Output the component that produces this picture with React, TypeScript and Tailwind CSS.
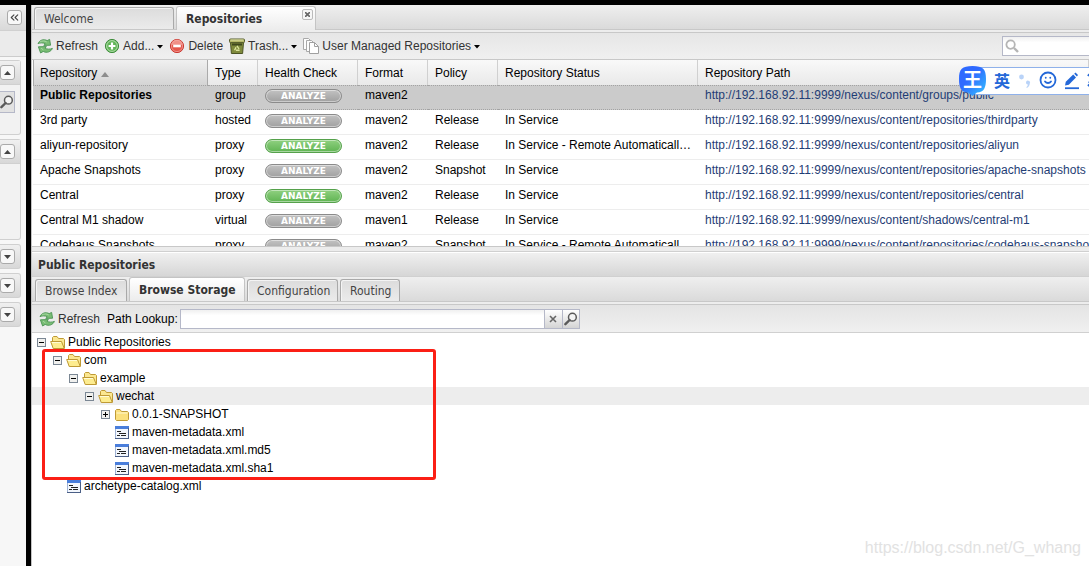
import { useState } from "react";
import { ChevronsLeft, Smile } from "lucide-react";

const ARIAL = "font-['Liberation_Sans',Arial,sans-serif]";
const TAHOMA = "font-['DejaVu_Sans_Condensed',Tahoma,sans-serif]";

const BASE_URL = "http://192.168.92.11:9999/nexus/content/";

const repositories = [
  { name: "Public Repositories", type: "group", format: "maven2", policy: "", status: "", path: "groups/public", active: false },
  { name: "3rd party", type: "hosted", format: "maven2", policy: "Release", status: "In Service", path: "repositories/thirdparty", active: false },
  { name: "aliyun-repository", type: "proxy", format: "maven2", policy: "Release", status: "In Service - Remote Automatically Blocked", path: "repositories/aliyun", active: true },
  { name: "Apache Snapshots", type: "proxy", format: "maven2", policy: "Snapshot", status: "In Service", path: "repositories/apache-snapshots", active: false },
  { name: "Central", type: "proxy", format: "maven2", policy: "Release", status: "In Service", path: "repositories/central", active: true },
  { name: "Central M1 shadow", type: "virtual", format: "maven1", policy: "Release", status: "In Service", path: "shadows/central-m1", active: false },
  { name: "Codehaus Snapshots", type: "proxy", format: "maven2", policy: "Snapshot", status: "In Service - Remote Automatically Blocked", path: "repositories/codehaus-snapshots", active: false },
];

const columns = [
  { label: "Type", width: "w-[50px]" },
  { label: "Health Check", width: "w-[100px]" },
  { label: "Format", width: "w-[70px]" },
  { label: "Policy", width: "w-[70px]" },
  { label: "Repository Status", width: "w-[200px]" },
  { label: "Repository Path", width: "w-auto" },
];

type Node = { label: string; kind: "open" | "closed" | "file"; indent: string };

const nodes: Node[] = [
  { label: "Public Repositories", kind: "open", indent: "pl-0.5" },
  { label: "com", kind: "open", indent: "pl-[18px]" },
  { label: "example", kind: "open", indent: "pl-[34px]" },
  { label: "wechat", kind: "open", indent: "pl-[50px]" },
  { label: "0.0.1-SNAPSHOT", kind: "closed", indent: "pl-[66px]" },
  { label: "maven-metadata.xml", kind: "file", indent: "pl-[66px]" },
  { label: "maven-metadata.xml.md5", kind: "file", indent: "pl-[66px]" },
  { label: "maven-metadata.xml.sha1", kind: "file", indent: "pl-[66px]" },
  { label: "archetype-catalog.xml", kind: "file", indent: "pl-[18px]" },
];

function RefreshIcon() {
  return (
    <svg width="16" height="16" viewBox="0 0 16 16" className="shrink-0">
      <path d="M1 5.6C2.4 2.2 6.6 0.6 10.2 2.6L12.6 1.4L13.6 7.2L6.8 7.4L8.4 5.8C6.2 4.6 3.4 4.6 1 5.6Z" fill="#79bd74" stroke="#4a9352" strokeWidth="0.9" strokeLinejoin="round" />
      <path d="M15.4 10.4C14 13.8 9.8 15.4 6.2 13.4L3.6 15L1.4 8.8L9.4 8.6L8 10.2C10.2 11.4 13 11.4 15.4 10.4Z" fill="#79bd74" stroke="#4a9352" strokeWidth="0.9" strokeLinejoin="round" />
      <path d="M3 4C5 2.6 7.6 2.6 9.8 4M4 10L6.4 12" fill="none" stroke="#b4deae" strokeWidth="0.8" />
    </svg>
  );
}

function AddIcon() {
  return (
    <svg width="16" height="16" viewBox="0 0 16 16" className="shrink-0">
      <circle cx="8" cy="8" r="6.6" fill="#62b558" stroke="#3f8d3c" />
      <circle cx="8" cy="8" r="5.4" fill="none" stroke="#b9e0b3" strokeWidth="0.9" />
      <path d="M8 4.6V11.4M4.6 8H11.4" stroke="#fff" strokeWidth="2.2" />
    </svg>
  );
}

function DeleteIcon() {
  return (
    <svg width="16" height="16" viewBox="0 0 16 16" className="shrink-0">
      <circle cx="8" cy="8" r="6.6" fill="#e5574c" stroke="#c93a32" />
      <path d="M2.4 7A5.6 5.6 0 0 1 13.6 7Z" fill="#f08f86" />
      <circle cx="8" cy="8" r="5.6" fill="none" stroke="#f3a9a3" strokeWidth="0.7" />
      <path d="M4.2 8H11.8" stroke="#fff" strokeWidth="2.6" />
    </svg>
  );
}

function TrashIcon() {
  return (
    <svg width="16" height="16" viewBox="0 0 16 16" className="shrink-0">
      <path d="M1.5 4.5H14.5L13.6 15.5H2.4Z" fill="#7f8a3c" stroke="#4c5424" />
      <path d="M3 6.5H13" stroke="#3f471d" strokeWidth="2" />
      <rect x="0.5" y="1" width="15" height="3.6" rx="1" fill="#b5b868" stroke="#555c2c" />
      <path d="M1.5 2H14.5" stroke="#dfe0aa" />
      <path d="M8 7.8L10 11M10.6 12.2H7M5.6 12.2L7 9.2" stroke="#dbe49b" strokeWidth="1.4" fill="none" />
    </svg>
  );
}

function CopyIcon() {
  return (
    <svg width="16" height="16" viewBox="0 0 16 16" className="shrink-0">
      <path d="M0.5 0.5H5.5L8.5 3.5V11.5H0.5Z" fill="#fdfdfd" stroke="#a9a9a9" />
      <path d="M3.5 2.5H8.5L11.5 5.5V13.5H3.5Z" fill="#fdfdfd" stroke="#a9a9a9" />
      <path d="M6.5 4.5H11.5L15.5 8.5V15.5H6.5Z" fill="#fff" stroke="#a0a0a0" />
      <path d="M11.5 4.5V8.5H15.5" fill="none" stroke="#a0a0a0" />
    </svg>
  );
}

function Caret() {
  return (
    <svg width="6" height="4" viewBox="0 0 6 4" className="mt-0.5 shrink-0">
      <path d="M0 0H6L3 3.4Z" fill="#000" />
    </svg>
  );
}

function Magnifier() {
  return (
    <svg width="14" height="14" viewBox="0 0 14 14">
      <circle cx="8.4" cy="5.2" r="3.9" fill="#f4f4f4" stroke="#5a5a5a" strokeWidth="1.5" />
      <path d="M5.6 8L1.4 12.2" stroke="#5a5a5a" strokeWidth="2.4" strokeLinecap="round" />
    </svg>
  );
}

function FolderIcon({ open }: { open: boolean }) {
  if (open) {
    return (
      <svg width="16" height="18" viewBox="0 0 16 18" className="shrink-0">
        <path d="M2.5 13V4.5L3.5 3.5H7L8.5 5.5H13.5L14.5 6.5V15H4Z" fill="#fbe790" stroke="#bf9a35" />
        <path d="M0.7 8.5H11.5L14.3 15.5H3.2Z" fill="#fdec8f" stroke="#bf9a35" strokeLinejoin="round" />
        <path d="M1.8 9.5H11" stroke="#fffbd6" />
      </svg>
    );
  }
  return (
    <svg width="16" height="18" viewBox="0 0 16 18" className="shrink-0">
      <path d="M1.5 14.5V5.5L2.5 4.5H6L7.5 6.5H13.5L14.5 7.5V14.5L13.5 15.5H2.5Z" fill="#fbe07c" stroke="#bf9a35" />
      <path d="M2.5 8H13.5" stroke="#fff8cf" />
    </svg>
  );
}

function FileIcon() {
  return (
    <svg width="16" height="18" viewBox="0 0 16 18" className="shrink-0">
      <rect x="1.5" y="3.5" width="13" height="12" fill="#f3f7fd" stroke="#9fb2d4" />
      <path d="M1 4.5H15" stroke="#4a7edb" strokeWidth="3" />
      <path d="M1 15.5H15M14.5 5V16" stroke="#4b5f86" />
      <path d="M3 8.5H7M5 10.5H12M3 12.5H6M7 12.5H12" stroke="#222" />
    </svg>
  );
}

function Expander({ open, label }: { open: boolean; label: string }) {
  return (
    <button type="button" aria-label={(open ? "Collapse " : "Expand ") + label} className="flex w-4 shrink-0 justify-center">
      <svg width="10" height="18" viewBox="0 0 10 18">
        <rect x="0.5" y="5.5" width="8" height="8" fill="#f0f0ee" stroke="#7b8794" />
        <path d="M2 9.5H7" stroke="#000" />
        {!open && <path d="M4.5 7V12" stroke="#000" />}
      </svg>
    </button>
  );
}

function ToolButton({ icon, label, menu }: { icon: React.ReactNode; label: string; menu?: boolean }) {
  return (
    <button type="button" className="flex items-center gap-[3px] whitespace-nowrap text-[#333]">
      {icon}
      <span>{label}</span>
      {menu && <Caret />}
    </button>
  );
}

function Tab({ label, active, width, onClick }: { label: string; active: boolean; width: string; onClick?: () => void }) {
  return (
    <button
      type="button"
      role="tab"
      aria-selected={active}
      onClick={onClick}
      className={`${width} rounded-t-[3px] border border-b-0 px-[9px] text-left whitespace-nowrap ${
        active
          ? "h-6 border-[#c4c4c4] bg-linear-to-b from-white to-[#ececec] font-bold text-[#333]"
          : "h-[22px] border-[#a9a9a9] bg-linear-to-b from-[#dcdcdc] to-[#ebebeb] text-[#444] shadow-[inset_1px_1px_0_#f4f4f4]"
      }`}
    >
      {label}
    </button>
  );
}

function ToggleButton({ up, label }: { up?: boolean; label: string }) {
  return (
    <button type="button" aria-label={label} className="flex size-[15px] items-center justify-center rounded-[3px] border border-[#aaa] bg-[#f8f8f8]">
      <svg width="7" height="4" viewBox="0 0 7 4">
        <path d={up ? "M0 4H7L3.5 0Z" : "M0 0H7L3.5 4Z"} fill="#444" />
      </svg>
    </button>
  );
}

function Sidebar() {
  return (
    <aside className="w-[26px] shrink-0 bg-[#f7f7f7]">
      <div className="flex h-[26px] items-center justify-end border-b border-[#d0d0d0] bg-linear-to-b from-[#efefef] to-[#d9d9d9] pr-1">
        <button type="button" aria-label="Collapse sidebar" className="flex size-[15px] items-center justify-center rounded-[3px] border border-[#aaa] bg-[#f8f8f8] text-[#444]">
          <ChevronsLeft size={13} />
        </button>
      </div>
      <div className="h-[26px] border-b border-[#ccc] bg-[#ebebeb]" />
      <div className="mt-[3px] mr-[5px] flex flex-col gap-1">
        <section className="h-[75px] rounded-r-[3px] border border-l-0 border-[#d0d0d0] bg-[#f2f2f2]">
          <div className="h-6 border-b border-[#d0d0d0] bg-linear-to-b from-[#f0f0f0] to-[#d8d8d8] pt-1">
            <ToggleButton up label="Collapse search" />
          </div>
          <button type="button" aria-label="Search artifacts" className="mt-1.5 flex h-[22px] w-[15px] items-center justify-center border border-l-0 border-[#b5b8c8] bg-[#e2e2e2]">
            <Magnifier />
          </button>
        </section>
        <section className="h-[101px] rounded-r-[3px] border border-l-0 border-[#d0d0d0] bg-[#f2f2f2]">
          <div className="h-6 border-b border-[#d0d0d0] bg-linear-to-b from-[#f0f0f0] to-[#d8d8d8] pt-1">
            <ToggleButton up label="Collapse views" />
          </div>
        </section>
        {["security", "administration", "help"].map((name) => (
          <section key={name} className="h-[25px] rounded-r-[3px] border border-l-0 border-[#d0d0d0] bg-linear-to-b from-[#f0f0f0] to-[#d8d8d8] pt-1">
            <ToggleButton label={"Expand " + name} />
          </section>
        ))}
      </div>
    </aside>
  );
}

function RepositoryGrid() {
  return (
    <div className="h-[186px] overflow-hidden bg-white pl-px">
      <table className="w-full min-w-[1056px] table-fixed border-separate border-spacing-0 text-left whitespace-nowrap">
        <thead>
          <tr className="h-[25px] bg-linear-to-b from-[#f9f9f9] to-[#e9e9e9]">
            <th className="w-[175px] border-x border-[#aaa] bg-linear-to-b from-[#f0f0f0] to-[#d4d4d4] pl-1.5 font-normal">
              <span className="flex items-center gap-1">
                Repository
                <svg width="8" height="5" viewBox="0 0 8 5" className="mt-1">
                  <path d="M0 5H8L4 0Z" fill="#8d8d8d" />
                </svg>
              </span>
            </th>
            {columns.map((c) => (
              <th key={c.label} className={`${c.width} border-r border-[#d0d0d0] pl-[7px] font-normal`}>
                {c.label}
              </th>
            ))}
          </tr>
        </thead>
        <tbody>
          {repositories.map((r, i) => {
            const cell =
              i === 0
                ? "h-[25px] border-y border-dotted border-[#a3a3a3] bg-[#cbcbcb] pl-[7px] align-top"
                : "h-[25px] border-t border-b border-t-white border-b-[#ededed] pl-[7px] align-top";
            return (
              <tr key={r.name} className="leading-[18px]">
                <td className={`${cell} ${i === 0 ? "font-bold" : ""}`}>{r.name}</td>
                <td className={cell}>{r.type}</td>
                <td className={cell}>
                  <button
                    type="button"
                    className={`mt-[3px] flex h-3.5 w-[77px] items-center justify-center rounded-full border text-[9px] leading-3 font-bold text-white shadow-[inset_0_0_0_1px_rgba(255,255,255,0.45)] font-['DejaVu_Sans',Verdana,sans-serif] ${
                      r.active ? "border-[#55a14b] bg-linear-to-b from-[#8fd080] to-[#5fb452]" : "border-[#8b8b8b] bg-linear-to-b from-[#c2c2c2] to-[#a0a0a0]"
                    }`}
                  >
                    ANALYZE
                  </button>
                </td>
                <td className={cell}>{r.format}</td>
                <td className={cell}>{r.policy}</td>
                <td className={cell}>
                  <div className="truncate pr-1.5">{r.status}</div>
                </td>
                <td className={cell}>
                  <a href={BASE_URL + r.path} className="text-[#1f3d75]">
                    {BASE_URL + r.path}
                  </a>
                </td>
              </tr>
            );
          })}
        </tbody>
      </table>
    </div>
  );
}

function StorageTree() {
  const [selected, setSelected] = useState("wechat");

  return (
    <div className="relative flex-1 bg-white">
      <ul role="tree">
        {nodes.map((n) => (
          <li
            key={n.label}
            role="treeitem"
            aria-selected={n.label === selected}
            onClick={() => setSelected(n.label)}
            className={`flex h-[18px] items-center whitespace-nowrap ${n.indent} ${n.label === selected ? "bg-[#ededed]" : ""}`}
          >
            {n.kind === "file" ? <span className="w-4 shrink-0" /> : <Expander open={n.kind === "open"} label={n.label} />}
            {n.kind === "file" ? <FileIcon /> : <FolderIcon open={n.kind === "open"} />}
            <span className="pl-0.5">{n.label}</span>
          </li>
        ))}
      </ul>
      {/* highlighted storage path */}
      <div className="pointer-events-none absolute top-4 left-2.5 h-[131px] w-[394px] rounded-[3px] border-3 border-[#fb1f15]" />
      <span className="absolute right-2 bottom-2 text-base leading-5 text-[#e2e2e2]">https://blog.csdn.net/G_whang</span>
    </div>
  );
}

// floating input method bar that hangs over the right edge
function InputMethodBar() {
  return (
    <div className="absolute top-[61px] right-0 flex h-[30px] w-[130px] items-start overflow-hidden font-['Noto_Sans_CJK_SC',sans-serif]">
      <div className="absolute top-px right-0 left-4 h-7 border-y border-[#8fb1ea] bg-white" />
      <div className="relative h-[30px] w-[27px] shrink-0">
        <svg width="27" height="30" viewBox="0 0 27 30" className="absolute">
          <defs>
            <linearGradient id="ime" x1="0" y1="0" x2="1" y2="1">
              <stop offset="0.4" stopColor="#2f6aff" />
              <stop offset="1" stopColor="#35c4ff" />
            </linearGradient>
          </defs>
          <path d="M13.5 0C24 0 27 3 27 13C27 22 25 26 18 26.6L13.5 30L9 26.6C2 26 0 22 0 13C0 3 3 0 13.5 0Z" fill="url(#ime)" />
        </svg>
        <span className="relative block text-center text-[19px] leading-[26px] font-bold text-white">王</span>
      </div>
      <span className="relative ml-2 w-4 shrink-0 text-base leading-[29px] font-bold text-[#2468d8]">英</span>
      <svg width="14" height="30" viewBox="0 0 14 30" className="relative ml-2 shrink-0">
        <circle cx="3.5" cy="11" r="2.4" fill="#b9d3f8" />
        <path d="M8 16.5A2 2 0 1 1 11.8 17.5C11.6 19.5 10.5 21 8.8 22L8.4 21.2C9.3 20.4 9.8 19.6 9.8 18.5C8.8 18.5 8 17.6 8 16.5Z" fill="#b9d3f8" />
      </svg>
      <Smile size={18} strokeWidth={2.4} className="relative mt-[5px] ml-[7px] shrink-0 text-[#2468d8]" />
      <svg width="16" height="30" viewBox="0 0 16 30" className="relative ml-[7px] shrink-0">
        <path d="M1 19.5L1.8 15.8L9.2 8.6L12 11.4L4.8 18.8Z" fill="#2468d8" />
        <path d="M10.2 7.7L11.5 6.6L14 9.1L12.9 10.4Z" fill="#2468d8" />
        <path d="M1 22.2H15" stroke="#2468d8" strokeWidth="1.8" />
      </svg>
      <svg width="10" height="30" viewBox="0 0 10 30" className="relative ml-[7px] shrink-0">
        <path d="M1 10C3 7 6 7 7 9L2 17M1 20L7 14" fill="none" stroke="#2468d8" strokeWidth="2" />
      </svg>
    </div>
  );
}

export default function App() {
  const [tab, setTab] = useState("Browse Storage");

  return (
    <div className={`relative flex min-h-screen overflow-hidden border-t-[5px] border-black bg-black text-xs text-black ${ARIAL}`}>
      <Sidebar />
      <main className="ml-[5px] flex min-w-0 flex-1 flex-col border-l border-[#c4c4c4] bg-[#ededed]">
        <div role="tablist" className={`flex h-[25px] items-end gap-0.5 border-b border-[#c8c8c8] bg-linear-to-b from-[#efefef] to-[#dadada] pl-0.5 ${TAHOMA}`}>
          <Tab label="Welcome" active={false} width="w-[140px]" />
          <div className="relative -mb-px">
            <Tab label="Repositories" active width="w-[140px]" />
            <button type="button" aria-label="Close Repositories" className="absolute top-[3px] right-[3px] flex size-[11px] items-center justify-center rounded-xs border border-[#bbb] bg-[#f6f6f6]">
              <svg width="5" height="5" viewBox="0 0 5 5">
                <path d="M0 0L5 5M5 0L0 5" stroke="#666" strokeWidth="1.6" />
              </svg>
            </button>
          </div>
        </div>

        <div className="mt-0.5 flex h-7 items-center gap-1.5 border-y border-t-[#c8c8c8] border-b-[#c8c8c8] bg-linear-to-b from-[#e6e6e6] to-[#f0f0f0] pl-[5px]">
          <ToolButton icon={<RefreshIcon />} label="Refresh" />
          <ToolButton icon={<AddIcon />} label="Add..." menu />
          <ToolButton icon={<DeleteIcon />} label="Delete" />
          <ToolButton icon={<TrashIcon />} label="Trash..." menu />
          <ToolButton icon={<CopyIcon />} label="User Managed Repositories" menu />
          <label className="ml-auto flex h-5 w-[87px] items-center border border-r-0 border-[#b5b8c8] bg-linear-to-b from-[#f0f0f0] to-white to-30% pl-0.5">
            <svg width="14" height="14" viewBox="0 0 14 14" className="shrink-0">
              <circle cx="5.6" cy="5.6" r="4.2" fill="none" stroke="#b5b5b5" strokeWidth="1.8" />
              <path d="M9 9L13 13" stroke="#b5b5b5" strokeWidth="2.4" />
            </svg>
            <input type="text" aria-label="Search repositories" className="w-full min-w-0 bg-transparent outline-none" />
          </label>
        </div>

        <RepositoryGrid />

        <div className="h-1.5 border-y border-t-[#c8c8c8] border-b-[#d0d0d0] bg-[#ececec]" />
        <h2 className={`h-[25px] border-t border-b border-t-white border-b-[#d0d0d0] bg-linear-to-b from-[#f0f0f0] to-[#d6d6d6] pl-1.5 font-bold leading-6 text-[#333] ${TAHOMA}`}>
          Public Repositories
        </h2>
        <div role="tablist" className={`flex h-[25px] items-end gap-0.5 border-b border-[#c8c8c8] bg-linear-to-b from-[#efefef] to-[#dadada] pl-[3px] ${TAHOMA}`}>
          <Tab label="Browse Index" active={tab === "Browse Index"} width="w-[92px]" onClick={() => setTab("Browse Index")} />
          <Tab label="Browse Storage" active={tab === "Browse Storage"} width="w-[116px]" onClick={() => setTab("Browse Storage")} />
          <Tab label="Configuration" active={tab === "Configuration"} width="w-[91px]" onClick={() => setTab("Configuration")} />
          <Tab label="Routing" active={tab === "Routing"} width="w-[60px]" onClick={() => setTab("Routing")} />
        </div>

        <div className="mt-0.5 flex h-[29px] items-center border-y border-t-[#c8c8c8] border-b-[#d0d0d0] bg-linear-to-b from-[#e4e4e4] to-[#f0f0f0] pl-[7px]">
          <ToolButton icon={<RefreshIcon />} label="Refresh" />
          <label htmlFor="path-lookup" className="pr-0.5 pl-[7px] whitespace-nowrap">
            Path Lookup:
          </label>
          <input id="path-lookup" type="text" className="h-5 w-[365px] min-w-0 border border-[#b5b8c8] bg-linear-to-b from-[#f0f0f0] to-white to-30% px-1 outline-none" />
          <button type="button" aria-label="Clear path" className="flex h-5 w-[17px] items-center justify-center border-y border-[#b5b8c8] bg-linear-to-b from-white to-[#d4d4d4]">
            <svg width="8" height="8" viewBox="0 0 8 8">
              <path d="M1 1L7 7M7 1L1 7" stroke="#666" strokeWidth="1.6" />
            </svg>
          </button>
          <button type="button" aria-label="Look up path" className="flex h-5 w-[18px] items-center justify-center border border-[#b5b8c8] bg-linear-to-b from-white to-[#d4d4d4]">
            <Magnifier />
          </button>
        </div>

        <StorageTree />
      </main>
      <InputMethodBar />
    </div>
  );
}
